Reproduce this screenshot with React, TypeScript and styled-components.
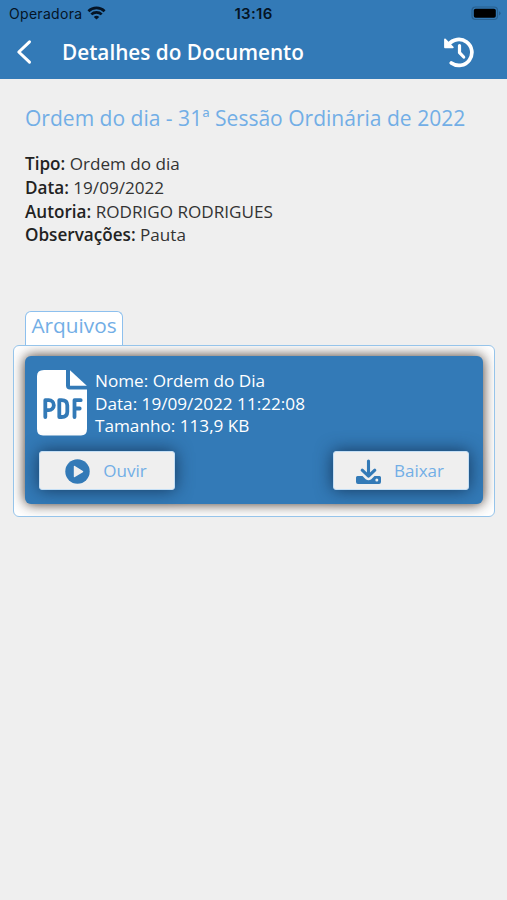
import React from 'react';
import styled, { createGlobalStyle } from 'styled-components';

const blue = '#337ab7';
const sky = '#72aee6';

const GlobalStyle = createGlobalStyle`
  * { box-sizing: border-box; }
  body { margin: 0; background: #efefef; font-family: 'Open Sans', 'Noto Sans', sans-serif; }
  svg { display: block; flex: none; }
`;

const Screen = styled.div`
  width: 507px;
  height: 900px;
  overflow: hidden;
  background: #efefef;
`;

const Header = styled.header`
  height: 79px;
  background: ${blue};
`;

const StatusBar = styled.div`
  height: 27px;
  padding: 0 7px 0 9px;
  display: grid;
  grid-template-columns: 1fr auto 1fr;
  align-items: center;
  font: 14px/27px Inter, sans-serif;
  color: #051425;
`;

const Carrier = styled.div`
  display: flex;
  align-items: center;
  gap: 5px;
  letter-spacing: 0.3px;

  svg { margin-top: -2px; }
`;

const Clock = styled.div`
  margin-right: 2px;
  font-size: 15px;
  font-weight: 600;
  letter-spacing: 0.3px;
`;

const Battery = styled.div`
  display: flex;
  justify-content: flex-end;
  margin-right: -1px;
`;

const NavBar = styled.div`
  height: 50px;
  display: flex;
  align-items: center;
  padding: 0 32px 0 14px;
`;

const NavTitle = styled.h1`
  flex: 1;
  margin: 0 0 0 28px;
  font-size: 20.75px;
  line-height: 28px;
  font-weight: 600;
  color: #fff;
  white-space: nowrap;
`;

const Details = styled.section`
  height: 232px;
  padding: 23px 25px 0;
`;

const DocTitle = styled.h2`
  margin: 0 0 18px;
  font-size: 21.04px;
  line-height: 32px;
  font-weight: 400;
  color: ${sky};
  white-space: nowrap;
`;

const Field = styled.div`
  font-size: 17.12px;
  line-height: 23.75px;
  color: #333;
  white-space: nowrap;
`;

const Label = styled.span`
  font-weight: 600;
  color: #222;
`;

const Tab = styled.div`
  width: 98px;
  height: 34px;
  margin-left: 25px;
  border: 1px solid #8dc0ee;
  border-bottom: 0;
  border-radius: 6px 6px 0 0;
  background: #fff;
  font-size: 20.8px;
  line-height: 27px;
  text-align: center;
  color: ${sky};
`;

const Panel = styled.section`
  height: 172px;
  margin: 0 12px 0 13px;
  padding: 10px 11px 0;
  overflow: hidden;
  border: 1px solid #96c4ea;
  border-radius: 6px;
  background: #fff;
`;

const FileCard = styled.article`
  height: 148px;
  padding: 13px 14px 0 12px;
  border-radius: 6px;
  background: ${blue};
  box-shadow: 0 0 13px rgba(45, 30, 20, 0.9);
`;

const FileInfo = styled.div`
  height: 82px;
  display: flex;
  gap: 8px;
`;

const FileLines = styled.div`
  padding-top: 1px;
  font-size: 17.17px;
  line-height: 22.5px;
  font-weight: 500;
  color: #fff;
  white-space: nowrap;
`;

const Actions = styled.div`
  display: flex;
  justify-content: space-between;
  padding-left: 2px;
`;

const Action = styled.button`
  width: 136px;
  height: 39px;
  display: flex;
  align-items: center;
  justify-content: center;
  gap: 13px;
  padding: 1px 2px 0 0;
  border: 1px solid #c5dff5;
  border-radius: 3px;
  background: #efefef;
  box-shadow: 0 0 17px rgba(15, 40, 70, 0.8);
  font: 17px/24px 'Open Sans', sans-serif;
  color: ${sky};
`;

const WifiIcon = () => (
  <svg width="19" height="14" viewBox="0 0 19 14" fill="none" stroke="#051425" strokeWidth="2.7">
    <path d="M1.4 5.2a11.7 11.7 0 0 1 16.2 0" />
    <path d="M4.3 8.4a7.5 7.5 0 0 1 10.4 0" />
    <path d="M6.8 10.9a4 4 0 0 1 5.4 0l-2.7 2.7z" fill="#051425" stroke="none" />
  </svg>
);

const BatteryIcon = () => (
  <svg width="30" height="15" viewBox="0 0 30 15">
    <rect x="1" y="1" width="25.5" height="12.5" rx="3.5" fill="none" stroke="#28608f" strokeWidth="1.2" />
    <rect x="2.8" y="2.8" width="22" height="9" rx="1.8" fill="#000" />
    <path d="M28 5.2v4.2q1.6-.6 1.6-2.1T28 5.2" fill="#28608f" />
  </svg>
);

const BackIcon = () => (
  <svg width="20" height="26" viewBox="0 0 20 26" fill="none" stroke="#fff" strokeWidth="3" strokeLinecap="round" strokeLinejoin="round">
    <path d="M15.5 2.8 4.8 13l10.7 10.2" />
  </svg>
);

const HistoryIcon = () => (
  <svg width="32" height="32" viewBox="0 0 32 32" fill="none" stroke="#fff" strokeWidth="3.7" strokeLinecap="round" strokeLinejoin="round">
    <path d="M5.5 8.6A13 13 0 1 1 8.3 27" />
    <path d="M2 3.5v7.8h7.8z" fill="#fff" strokeWidth="1.8" />
    <path d="M16.5 9.5v7.2l4.2 4.3" strokeWidth="3.2" />
  </svg>
);

const PdfIcon = () => (
  <svg width="50" height="67" viewBox="0 0 50 67">
    <path d="M7 1h22v15.5q0 4 4 4h17V60q0 6.5-6 6.5H6q-6 0-6-6.5V7q0-6 7-6z" fill="#fff" />
    <path d="M33 1.2v15.5h16.8z" fill="#fff" />
    <g fill="none" stroke={blue} strokeWidth="3.8" strokeLinecap="round" strokeLinejoin="round">
      <path d="M8.3 48V31.200h3.500a5 5 0 0 1 0 10h-3.500" />
      <path d="M22.300 31.200V48h2.200q5.800 0 5.800-5.300v-6.200q0-5.300-5.800-5.300z" />
      <path d="M37.500 48V31.200H43.700M37.500 39.500h5.200" />
    </g>
  </svg>
);

const PlayIcon = () => (
  <svg width="25" height="25" viewBox="0 0 25 25">
    <circle cx="12.5" cy="12.5" r="12.2" fill={blue} />
    <path d="M8.8 7.6v9.8q0 1.2 1.1.6l8-4.8q.9-.7 0-1.3l-8-4.900q-1.100-.6-1.100.6z" fill="#efefef" />
  </svg>
);

const DownloadIcon = () => (
  <svg width="25" height="25" viewBox="0 0 25 25">
    <path d="M1.5 17h5l3.2 3.2q2.8 2 5.6 0l3.2-3.2h5q1.500 0 1.500 1.500V23q0 2-2 2H2q-2 0-2-2v-4.500q0-1.500 1.500-1.500z" fill={blue} />
    <circle cx="20.8" cy="21" r="1.5" fill="#efefef" />
    <path d="M12.5 2v15M6.2 11.2l6.3 6 6.300-6" fill="none" stroke={blue} strokeWidth="3.1" strokeLinecap="round" strokeLinejoin="round" />
  </svg>
);

const fields = [
  ['Tipo:', 'Ordem do dia'],
  ['Data:', '19/09/2022'],
  ['Autoria:', 'RODRIGO RODRIGUES'],
  ['Observações:', 'Pauta'],
];

export default function App() {
  return (
    <>
      <GlobalStyle />
      <Screen>
        <Header>
          <StatusBar>
            <Carrier>Operadora<WifiIcon /></Carrier>
            <Clock>13:16</Clock>
            <Battery><BatteryIcon /></Battery>
          </StatusBar>
          <NavBar>
            <BackIcon />
            <NavTitle>Detalhes do Documento</NavTitle>
            <HistoryIcon />
          </NavBar>
        </Header>
        <Details>
          <DocTitle>Ordem do dia - 31ª Sessão Ordinária de 2022</DocTitle>
          {fields.map(([label, value]) => (
            <Field key={label}><Label>{label}</Label> {value}</Field>
          ))}
        </Details>
        <Tab>Arquivos</Tab>
        <Panel>
          <FileCard>
            <FileInfo>
              <PdfIcon />
              <FileLines>
                <div>Nome: Ordem do Dia</div>
                <div>Data: 19/09/2022 11:22:08</div>
                <div>Tamanho: 113,9 KB</div>
              </FileLines>
            </FileInfo>
            <Actions>
              <Action><PlayIcon />Ouvir</Action>
              <Action><DownloadIcon />Baixar</Action>
            </Actions>
          </FileCard>
        </Panel>
      </Screen>
    </>
  );
}
